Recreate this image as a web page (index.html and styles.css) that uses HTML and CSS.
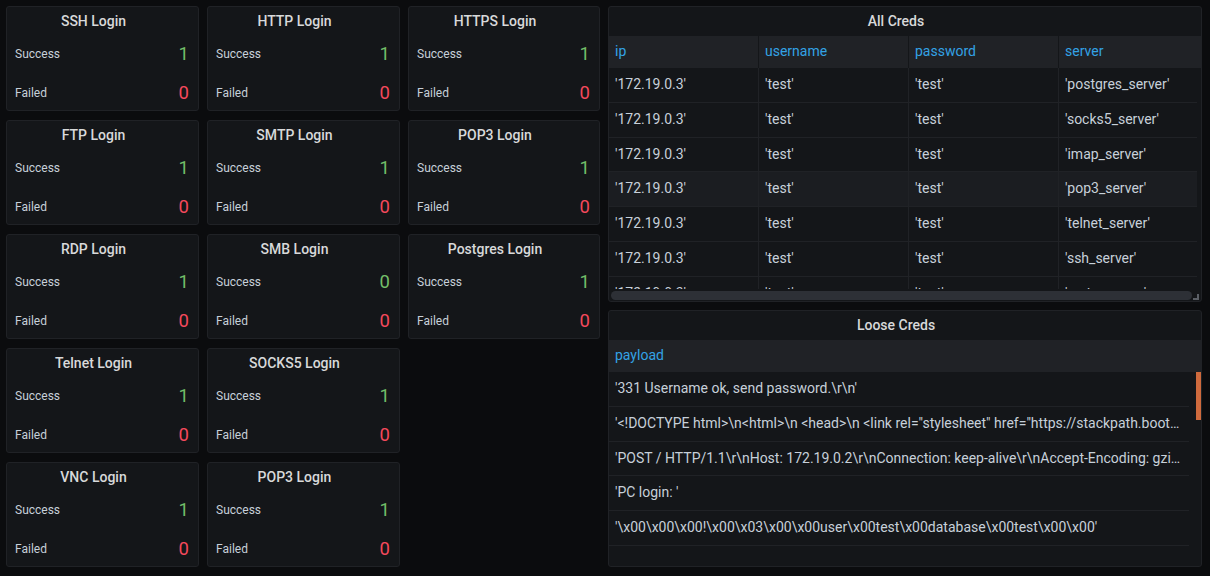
FILE: index.html
```html
<!DOCTYPE html>
<html>
<head>
<meta charset="utf-8">
<link rel="stylesheet" href="styles.css">
</head>
<body>
<div class="dash">
  <div class="stats">
    <div class="card"><div class="card-title">SSH Login</div><div class="stat-row"><span class="label">Success</span><span class="val ok">1</span></div><div class="stat-row"><span class="label">Failed</span><span class="val bad">0</span></div></div>
    <div class="card"><div class="card-title">HTTP Login</div><div class="stat-row"><span class="label">Success</span><span class="val ok">1</span></div><div class="stat-row"><span class="label">Failed</span><span class="val bad">0</span></div></div>
    <div class="card"><div class="card-title">HTTPS Login</div><div class="stat-row"><span class="label">Success</span><span class="val ok">1</span></div><div class="stat-row"><span class="label">Failed</span><span class="val bad">0</span></div></div>
    <div class="card"><div class="card-title">FTP Login</div><div class="stat-row"><span class="label">Success</span><span class="val ok">1</span></div><div class="stat-row"><span class="label">Failed</span><span class="val bad">0</span></div></div>
    <div class="card"><div class="card-title">SMTP Login</div><div class="stat-row"><span class="label">Success</span><span class="val ok">1</span></div><div class="stat-row"><span class="label">Failed</span><span class="val bad">0</span></div></div>
    <div class="card"><div class="card-title">POP3 Login</div><div class="stat-row"><span class="label">Success</span><span class="val ok">1</span></div><div class="stat-row"><span class="label">Failed</span><span class="val bad">0</span></div></div>
    <div class="card"><div class="card-title">RDP Login</div><div class="stat-row"><span class="label">Success</span><span class="val ok">1</span></div><div class="stat-row"><span class="label">Failed</span><span class="val bad">0</span></div></div>
    <div class="card"><div class="card-title">SMB Login</div><div class="stat-row"><span class="label">Success</span><span class="val ok">0</span></div><div class="stat-row"><span class="label">Failed</span><span class="val bad">0</span></div></div>
    <div class="card"><div class="card-title">Postgres Login</div><div class="stat-row"><span class="label">Success</span><span class="val ok">1</span></div><div class="stat-row"><span class="label">Failed</span><span class="val bad">0</span></div></div>
    <div class="card"><div class="card-title">Telnet Login</div><div class="stat-row"><span class="label">Success</span><span class="val ok">1</span></div><div class="stat-row"><span class="label">Failed</span><span class="val bad">0</span></div></div>
    <div class="card"><div class="card-title">SOCKS5 Login</div><div class="stat-row"><span class="label">Success</span><span class="val ok">1</span></div><div class="stat-row"><span class="label">Failed</span><span class="val bad">0</span></div></div>
    <div class="spacer"></div>
    <div class="card"><div class="card-title">VNC Login</div><div class="stat-row"><span class="label">Success</span><span class="val ok">1</span></div><div class="stat-row"><span class="label">Failed</span><span class="val bad">0</span></div></div>
    <div class="card"><div class="card-title">POP3 Login</div><div class="stat-row"><span class="label">Success</span><span class="val ok">1</span></div><div class="stat-row"><span class="label">Failed</span><span class="val bad">0</span></div></div>
  </div>

  <div class="right">
    <div class="panel p-all">
      <div class="panel-title">All Creds</div>
      <div class="thead">
        <div class="th">ip</div><div class="th">username</div><div class="th">password</div><div class="th">server</div>
      </div>
      <div class="tbody">
        <div class="tr"><div class="td">'172.19.0.3'</div><div class="td">'test'</div><div class="td">'test'</div><div class="td">'postgres_server'</div></div>
        <div class="tr"><div class="td">'172.19.0.3'</div><div class="td">'test'</div><div class="td">'test'</div><div class="td">'socks5_server'</div></div>
        <div class="tr"><div class="td">'172.19.0.3'</div><div class="td">'test'</div><div class="td">'test'</div><div class="td">'imap_server'</div></div>
        <div class="tr hl"><div class="td">'172.19.0.3'</div><div class="td">'test'</div><div class="td">'test'</div><div class="td">'pop3_server'</div></div>
        <div class="tr"><div class="td">'172.19.0.3'</div><div class="td">'test'</div><div class="td">'test'</div><div class="td">'telnet_server'</div></div>
        <div class="tr"><div class="td">'172.19.0.3'</div><div class="td">'test'</div><div class="td">'test'</div><div class="td">'ssh_server'</div></div>
        <div class="tr"><div class="td">'172.19.0.3'</div><div class="td">'test'</div><div class="td">'test'</div><div class="td">'smtp_server'</div></div>
      </div>
      <div class="hscroll">
        <div class="hthumb"></div>
        <svg class="grip" width="6" height="6" viewBox="0 0 6 6"><path d="M4 0h2v6H0V4h4z" fill="#5b5f66"/></svg>
      </div>
    </div>

    <div class="panel p-loose">
      <div class="panel-title">Loose Creds</div>
      <div class="thead"><div class="th wide">payload</div></div>
      <div class="lbody">
        <div class="lr">'331 Username ok, send password.\r\n'</div>
        <div class="lr">'&lt;!DOCTYPE html&gt;\n&lt;html&gt;\n &lt;head&gt;\n &lt;link rel="stylesheet" href="https://stackpath.bootstrapcdn.com/bootstrap/4.3.1/css/bootstrap.min.css"&gt;'</div>
        <div class="lr">'POST / HTTP/1.1\r\nHost: 172.19.0.2\r\nConnection: keep-alive\r\nAccept-Encoding: gzip, deflate\r\nAccept: */*'</div>
        <div class="lr">'PC login: '</div>
        <div class="lr">'\x00\x00\x00!\x00\x03\x00\x00user\x00test\x00database\x00test\x00\x00'</div>
      </div>
      <div class="vthumb"></div>
    </div>
  </div>
</div>
</body>
</html>
```
FILE: styles.css
```css
html, body {
  margin: 0;
  padding: 0;
  background: #0b0c0e;
  font-family: Roboto, "Liberation Sans", sans-serif;
  overflow: hidden;
}

.dash {
  display: flex;
  gap: 8px;
  padding: 6px 8px 0 6px;
}

.stats {
  display: grid;
  grid-template-columns: 193px 193px 192px;
  grid-auto-rows: 105px;
  column-gap: 8px;
  row-gap: 9px;
  align-content: start;
}

.card {
  background: #141619;
  border: 1px solid #202226;
  border-radius: 3px;
  box-sizing: border-box;
  overflow: hidden;
}

.card-title {
  height: 27px;
  line-height: 29px;
  text-align: center;
  padding-right: 18px;
  font-size: 14px;
  font-weight: 500;
  color: #d8d9da;
}

.stat-row {
  height: 39px;
  display: flex;
  align-items: center;
  justify-content: space-between;
  padding: 0 9px 0 8px;
}

.label {
  font-size: 12px;
  color: #c7d0d9;
}

.val {
  font-size: 18.5px;
}

.ok { color: #73bf69; }
.bad { color: #f2495c; }

.right {
  width: 594px;
  display: flex;
  flex-direction: column;
  gap: 8px;
}

.panel {
  background: #141619;
  border: 1px solid #202226;
  border-radius: 3px;
  box-sizing: border-box;
  position: relative;
  overflow: hidden;
}

.p-all { height: 296px; }
.p-loose { height: 257px; }

.panel-title {
  height: 29px;
  line-height: 29px;
  text-align: center;
  padding-right: 18px;
  font-size: 14px;
  font-weight: 500;
  color: #d8d9da;
}

.thead {
  display: flex;
  height: 32px;
  background: #202226;
  overflow: hidden;
}

.th {
  flex: none;
  width: 150px;
  box-sizing: border-box;
  padding-left: 6px;
  line-height: 31px;
  font-size: 14px;
  color: #33a2e5;
  border-right: 1px solid #141619;
}

.th.wide {
  width: 100%;
  border-right: none;
}

.tbody {
  height: 221px;
  overflow: hidden;
  margin-right: 4px;
}

.tr {
  display: flex;
  height: 34.75px;
  box-sizing: border-box;
  border-bottom: 1px solid #202226;
}

.tr.hl {
  background: #1b1d21;
}

.td {
  flex: none;
  width: 150px;
  box-sizing: border-box;
  padding-left: 6px;
  line-height: 33px;
  font-size: 14px;
  color: #c7d0d9;
  white-space: nowrap;
  border-right: 1px solid #202226;
}

.hscroll {
  position: relative;
  height: 12px;
  padding-top: 2px;
  box-sizing: border-box;
}

.hthumb {
  margin-left: 2px;
  width: 581px;
  height: 9px;
  border-radius: 4.5px;
  background: #2d3036;
}

.grip {
  position: absolute;
  right: 2px;
  top: 5px;
  display: block;
}

.lbody {
  margin-right: 12px;
}

.lr {
  height: 34.75px;
  box-sizing: border-box;
  border-bottom: 1px solid #202226;
  padding: 0 6px 0 6px;
  line-height: 33px;
  font-size: 14px;
  color: #c7d0d9;
  white-space: nowrap;
  overflow: hidden;
  text-overflow: ellipsis;
}

.vthumb {
  position: absolute;
  right: 0;
  top: 61px;
  width: 5px;
  height: 48px;
  background: #cf6a3d;
}
```
